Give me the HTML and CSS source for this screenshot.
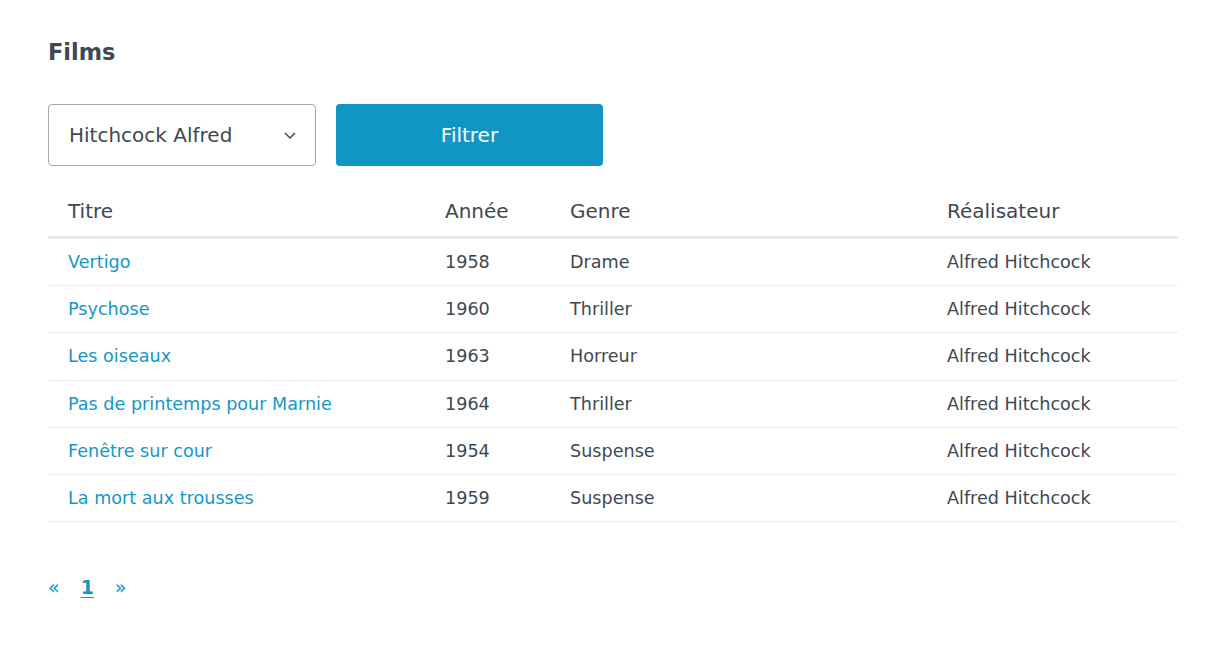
FILE: index.html
```html
<!DOCTYPE html>
<html lang="fr">

<head>
    <meta charset="UTF-8">
    <meta name="viewport" content="width=device-width, initial-scale=1.0">
    <title>Films</title>
    <link rel="stylesheet" href="styles.css">
</head>

<body>
    <div class="page">
        <h1>Films</h1>

        <form class="filter-form">
            <div class="select-wrap">
                <select name="realisateur">
                    <option>Hitchcock Alfred</option>
                </select>
                <svg class="chevron" width="14" height="14" viewBox="0 0 14 14">
                    <path d="M2 5 L7 10 L12 5" fill="none" stroke="#3d4852" stroke-width="1.5" />
                </svg>
            </div>
            <button type="submit">Filtrer</button>
        </form>

        <table class="films">
            <thead>
                <tr>
                    <th class="col-title">Titre</th>
                    <th class="col-year">Année</th>
                    <th class="col-genre">Genre</th>
                    <th>Réalisateur</th>
                </tr>
            </thead>
            <tbody>
                <tr>
                    <td><a href="#">Vertigo</a></td>
                    <td>1958</td>
                    <td>Drame</td>
                    <td>Alfred Hitchcock</td>
                </tr>
                <tr>
                    <td><a href="#">Psychose</a></td>
                    <td>1960</td>
                    <td>Thriller</td>
                    <td>Alfred Hitchcock</td>
                </tr>
                <tr>
                    <td><a href="#">Les oiseaux</a></td>
                    <td>1963</td>
                    <td>Horreur</td>
                    <td>Alfred Hitchcock</td>
                </tr>
                <tr>
                    <td><a href="#">Pas de printemps pour Marnie</a></td>
                    <td>1964</td>
                    <td>Thriller</td>
                    <td>Alfred Hitchcock</td>
                </tr>
                <tr>
                    <td><a href="#">Fenêtre sur cour</a></td>
                    <td>1954</td>
                    <td>Suspense</td>
                    <td>Alfred Hitchcock</td>
                </tr>
                <tr>
                    <td><a href="#">La mort aux trousses</a></td>
                    <td>1959</td>
                    <td>Suspense</td>
                    <td>Alfred Hitchcock</td>
                </tr>
            </tbody>
        </table>

        <nav class="pagination">
            <a href="#">&laquo;</a>
            <a href="#" class="current">1</a>
            <a href="#">&raquo;</a>
        </nav>
    </div>
</body>

</html>
```

FILE: styles.css
```css
body {
    font-family: "DejaVu Sans", Verdana, sans-serif;
    margin: 0;
    background-color: #fff;
    color: #3d4852;
}

.page {
    padding: 38px 48px 0 48px;
}

h1 {
    font-size: 22.4px;
    font-weight: bold;
    margin: 0 0 38px 0;
    line-height: 28px;
}

.filter-form {
    display: flex;
    gap: 20px;
    margin-bottom: 24px;
}

.select-wrap {
    position: relative;
    width: 268px;
}

select {
    appearance: none;
    width: 100%;
    height: 62px;
    padding: 0 40px 0 20px;
    font-family: inherit;
    font-size: 20px;
    color: #3d4852;
    background: #fff;
    border: 1px solid #a0aab4;
    border-radius: 4px;
    box-sizing: border-box;
}

.chevron {
    position: absolute;
    right: 19px;
    top: 24px;
    pointer-events: none;
}

button {
    width: 267px;
    height: 62px;
    background-color: #1196c3;
    color: #fff;
    font-family: inherit;
    font-size: 20px;
    border: none;
    border-radius: 4px;
    cursor: pointer;
}

.films {
    width: 100%;
    border-collapse: collapse;
}

.films th {
    text-align: left;
    font-weight: normal;
    font-size: 20px;
    padding: 9px 20px 13px 20px;
    border-bottom: 3px solid #e8ecef;
}

.col-title {
    width: 337px;
}

.col-year {
    width: 85px;
}

.col-genre {
    width: 337px;
}

.films td {
    font-size: 17.6px;
    padding: 0 20px;
    height: 46.2px;
    border-bottom: 1px solid #e8ecef;
}

.films a {
    color: #1496c8;
    text-decoration: none;
}

.pagination {
    display: flex;
    gap: 21px;
    margin-top: 54px;
    font-size: 19px;
}

.pagination a {
    color: #1496c8;
    text-decoration: none;
}

.pagination .current {
    font-weight: bold;
    text-decoration-line: underline;
    text-decoration-thickness: 2px;
    text-underline-offset: 3px;
}
```
